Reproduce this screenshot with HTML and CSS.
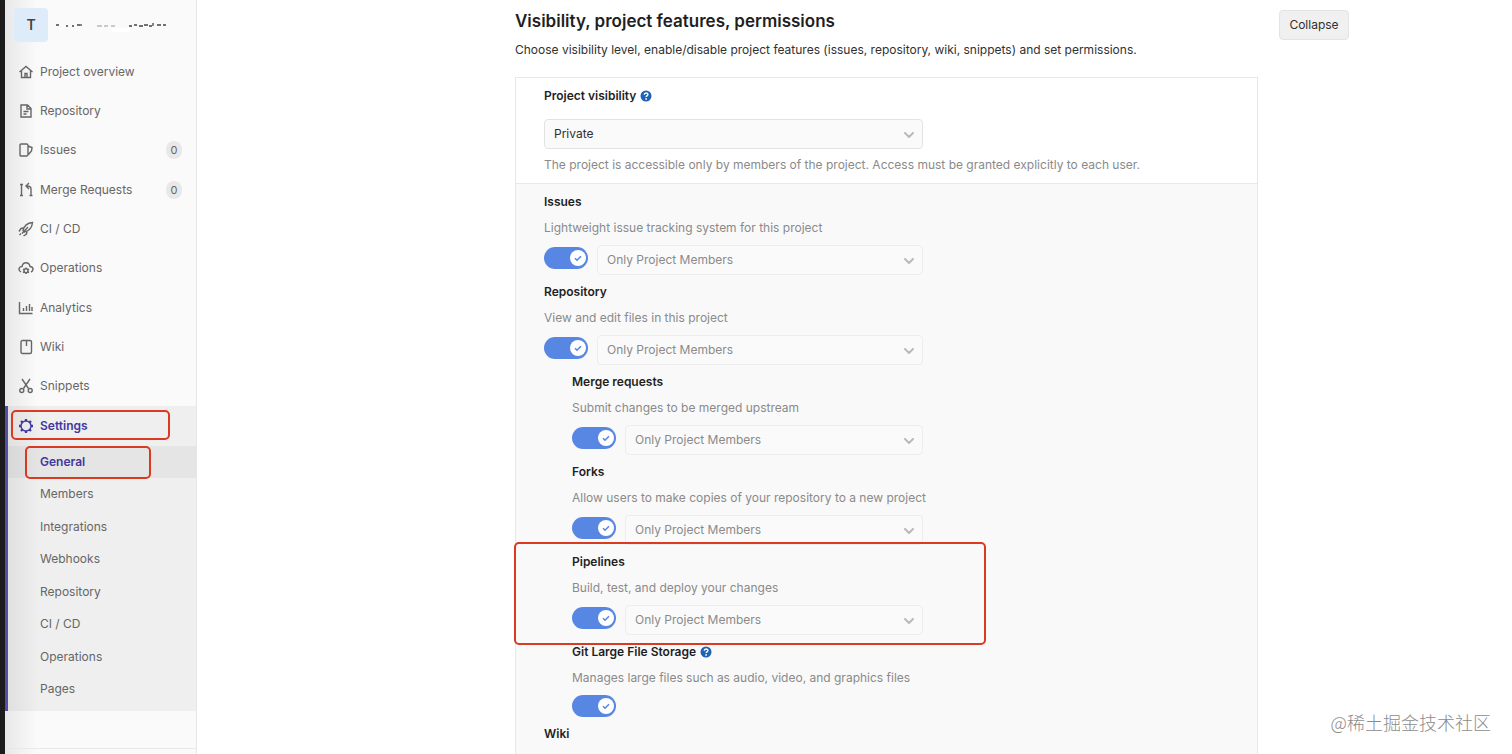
FILE: index.html
```html
<!DOCTYPE html>
<html lang="en">
<head>
    <meta charset="UTF-8">
    <meta name="viewport" content="width=device-width, initial-scale=1.0">
    <title>General Settings</title>
    <link rel="stylesheet" href="styles.css">
</head>
<body>
    <!-- Shared icons -->
    <svg class="icon-defs" aria-hidden="true">
        <symbol id="chevron" viewBox="0 0 10 6"><path d="M1 1l4 4 4-4" fill="none" stroke="currentColor" stroke-width="2" stroke-linecap="round" stroke-linejoin="round"/></symbol>
        <symbol id="check" viewBox="0 0 16 16"><path d="M5 8.200l2 2 4-4" fill="none" stroke="currentColor" stroke-width="1.600"/></symbol>
        <symbol id="question" viewBox="0 0 12 12"><circle cx="6" cy="6" r="5.500" fill="currentColor"/><path d="M4.200 4.800c.1-2.400 3.700-2.300 3.700-.2 0 1.300-1.800 1.200-1.800 2.500" fill="none" stroke="#fff" stroke-width="1.400"/><circle cx="6.100" cy="8.900" r=".9" fill="#fff"/></symbol>
    </svg>

    <div class="page">
        <aside class="sidebar">
            <a class="project" href="#" aria-label="Project">
                <span class="avatar">T</span>
                <svg class="project-name" viewBox="0 0 112 12" aria-hidden="true">
                    <path d="M2 5h3M12 6h2M18 6h2M23 5h3M27 4v2M75 6h3M80 5h3M85 6h4M90 5h4M95 6h3M99 3v3M103 5h4M109 5h3" stroke="#444" stroke-width="1.300"/>
                    <path d="M43 6h5M50 6h4M57 6h4" stroke="#999" stroke-width="1"/>
                    <path d="M58 8h18v4H58z" fill="#fff"/>
                </svg>
            </a>

            <ul class="nav">
                <li><a href="#"><svg viewBox="0 0 16 16"><path d="M1.500 8L8 2.500 14.500 8M3.500 7v6.500h9V7M7 13v-3.500h2V13"/></svg>Project overview</a></li>
                <li><a href="#"><svg viewBox="0 0 16 16"><path d="M3 2h6.500L13 5.500V14H3zM9 2v4h4M5.500 8.500h5M5.500 11h3"/></svg>Repository</a></li>
                <li><a href="#"><svg viewBox="0 0 16 16"><path d="M3 2h5.500a1.500 1.500 0 0 1 1.500 1.500v9A1.500 1.500 0 0 1 8.500 14H3a1 1 0 0 1-1-1V3a1 1 0 0 1 1-1zM10 4l4 1.500-.5 3.500-3 3.500"/></svg>Issues<span class="badge">0</span></a></li>
                <li><a href="#"><svg viewBox="0 0 16 16"><path d="M3.500 3v10M2 2.500h3M2 13.500h3M13 13V7c0-2-1-3-4-3M11 1L8 4l3 3M11.500 13.500h3"/></svg>Merge Requests<span class="badge">0</span></a></li>
                <li><a href="#"><svg viewBox="0 0 16 16"><path d="M5 9.500C6 5 9 2 14.500 1.500 14 7 11 10 6.500 11zM5.500 7l-2.500.5-2 3M9 10.500L8.500 13l-3 2M10 6l-6 6.500M1.500 14L3 12.500"/></svg>CI / CD</a></li>
                <li><a href="#"><svg viewBox="0 0 16 16"><path d="M3 12C-.5 10 1 6.500 4 6.500 5 1.500 11 1.500 12 6.500c3.500 0 4 4 1 5.500"/><circle cx="8" cy="10.800" r="2"/><path d="M8 7.500V9M8 12.500V14M5 9l1.500 1M9.500 11.700l1.500 1M5 12.700l1.500-1M9.500 10L11 9"/></svg>Operations</a></li>
                <li><a href="#"><svg viewBox="0 0 16 16"><path d="M1.500 2v11.500h13M5.500 8v3M8.500 6v5M11.500 4v7M14 7v4"/></svg>Analytics</a></li>
                <li><a href="#"><svg viewBox="0 0 16 16"><rect x="3" y="1.500" width="10.500" height="13" rx="1.500"/><path d="M8.500 2v5"/></svg>Wiki</a></li>
                <li><a href="#"><svg viewBox="0 0 16 16"><path d="M4 1l6.500 9.500M12 1L5.500 10.500"/><circle cx="3.800" cy="12.500" r="2"/><circle cx="12.200" cy="12.500" r="2"/></svg>Snippets</a></li>
            </ul>

            <div class="settings">
                <a class="settings-link" href="#"><svg viewBox="0 0 16 16"><circle cx="8" cy="8" r="5"/><path d="M8 1V3M8 13v2M1 8H3M13 8h2M3 3l1.500 1.500M11.500 11.500L13 13M3 13l1.500-1.500M11.500 4.500L13 3" stroke-width="2.300"/></svg>Settings</a>
                <ul class="subnav">
                    <li class="active"><a href="#">General</a></li>
                    <li><a href="#">Members</a></li>
                    <li><a href="#">Integrations</a></li>
                    <li><a href="#">Webhooks</a></li>
                    <li><a href="#">Repository</a></li>
                    <li><a href="#">CI / CD</a></li>
                    <li><a href="#">Operations</a></li>
                    <li><a href="#">Pages</a></li>
                </ul>
            </div>
            <div class="sidebar-footer"></div>
        </aside>

        <main>
            <section class="content">
                <header class="section-header">
                    <div>
                        <h1>Visibility, project features, permissions</h1>
                        <p>Choose visibility level, enable/disable project features (issues, repository, wiki, snippets) and set permissions.</p>
                    </div>
                    <button class="collapse" type="button">Collapse</button>
                </header>

                <form class="panel">
                    <div class="visibility">
                        <div class="title"><label for="visibility">Project visibility</label><svg class="help"><use href="#question"/></svg></div>
                        <div class="select">
                            <select id="visibility"><option>Private</option></select>
                            <svg><use href="#chevron"/></svg>
                        </div>
                        <p>The project is accessible only by members of the project. Access must be granted explicitly to each user.</p>
                    </div>

                    <div class="features">
                        <div class="feature">
                            <div class="title"><label for="issues">Issues</label></div>
                            <p>Lightweight issue tracking system for this project</p>
                            <div class="controls">
                                <span class="toggle"><input type="checkbox" id="issues" checked><svg><use href="#check"/></svg></span>
                                <div class="select"><select disabled aria-label="Issues access"><option>Only Project Members</option></select><svg><use href="#chevron"/></svg></div>
                            </div>
                        </div>
                        <div class="feature">
                            <div class="title"><label for="repository">Repository</label></div>
                            <p>View and edit files in this project</p>
                            <div class="controls">
                                <span class="toggle"><input type="checkbox" id="repository" checked><svg><use href="#check"/></svg></span>
                                <div class="select"><select disabled aria-label="Repository access"><option>Only Project Members</option></select><svg><use href="#chevron"/></svg></div>
                            </div>
                        </div>

                        <!-- Features that depend on the repository -->
                        <div class="nested">
                            <div class="feature">
                                <div class="title"><label for="merge">Merge requests</label></div>
                                <p>Submit changes to be merged upstream</p>
                                <div class="controls">
                                    <span class="toggle"><input type="checkbox" id="merge" checked><svg><use href="#check"/></svg></span>
                                    <div class="select"><select disabled aria-label="Merge requests access"><option>Only Project Members</option></select><svg><use href="#chevron"/></svg></div>
                                </div>
                            </div>
                            <div class="feature">
                                <div class="title"><label for="forks">Forks</label></div>
                                <p>Allow users to make copies of your repository to a new project</p>
                                <div class="controls">
                                    <span class="toggle"><input type="checkbox" id="forks" checked><svg><use href="#check"/></svg></span>
                                    <div class="select"><select disabled aria-label="Forks access"><option>Only Project Members</option></select><svg><use href="#chevron"/></svg></div>
                                </div>
                            </div>
                            <div class="feature marked">
                                <div class="title"><label for="pipelines">Pipelines</label></div>
                                <p>Build, test, and deploy your changes</p>
                                <div class="controls">
                                    <span class="toggle"><input type="checkbox" id="pipelines" checked><svg><use href="#check"/></svg></span>
                                    <div class="select"><select disabled aria-label="Pipelines access"><option>Only Project Members</option></select><svg><use href="#chevron"/></svg></div>
                                </div>
                            </div>
                            <div class="feature">
                                <div class="title"><label for="lfs">Git Large File Storage</label><svg class="help"><use href="#question"/></svg></div>
                                <p>Manages large files such as audio, video, and graphics files</p>
                                <span class="toggle"><input type="checkbox" id="lfs" checked><svg><use href="#check"/></svg></span>
                            </div>
                        </div>

                        <div class="feature">
                            <div class="title">Wiki</div>
                        </div>
                    </div>
                </form>
            </section>
        </main>
        <div class="watermark">@稀土掘金技术社区</div>
    </div>
</body>
</html>
```

FILE: styles.css
```css
/* Global Styles */
*, *::after {
    box-sizing: border-box;
}

body {
    margin: 0;
    font-family: Inter, "Noto Sans CJK SC", sans-serif;
    font-size: 12px;
    line-height: 20px;
    color: #303030;
    background-color: #fff;
}

h1, p, ul {
    margin: 0;
    padding: 0;
}

ul {
    list-style: none;
}

a {
    color: inherit;
    text-decoration: none;
}

.icon-defs {
    display: none;
}

.page {
    position: relative;
    display: flex;
    height: 100vh;
    overflow: hidden;
    border-left: 5px solid #1c1c1c;
}

/* Sidebar */
.sidebar {
    flex: none;
    display: flex;
    flex-direction: column;
    width: 192px;
    color: #666;
    border-right: 1px solid #e8e8e8;
    background: linear-gradient(to right, #e8e8e8, #fafafa 32px);
}

.project {
    display: flex;
    height: 52px;
    padding: 8px 0 0 9px;
}

.avatar {
    width: 34px;
    height: 34px;
    border-radius: 4px;
    background-color: #deecfa;
    color: #444;
    font-size: 14px;
    font-weight: 600;
    line-height: 34px;
    text-align: center;
}

.project-name {
    width: 112px;
    height: 12px;
    margin: 12px 0 0 6px;
}

.nav a, .settings-link {
    display: flex;
    align-items: center;
    gap: 6px;
    height: 39px;
    padding: 0 14px 0 13px;
}

.nav li:nth-child(3n) {
    padding-bottom: 1px;
}

.nav svg, .settings-link svg {
    width: 16px;
    height: 16px;
    fill: none;
    stroke: currentColor;
    stroke-width: 1.4;
}

.badge {
    width: 16px;
    height: 18px;
    margin-left: auto;
    border-radius: 9px;
    background-color: #e8e8e8;
    font-size: 11px;
    line-height: 18px;
    text-align: center;
}

.settings {
    border-left: 3px solid #5550a5;
    background: linear-gradient(to right, #e0e0e0, #efefef 32px);
}

.settings-link {
    position: relative;
    height: 40px;
    padding-left: 10px;
    color: #41389f;
    font-weight: 600;
}

.subnav {
    padding-bottom: 5px;
}

.subnav a {
    display: block;
    height: 32px;
    padding-left: 32px;
    line-height: 32px;
}

.subnav li:nth-child(2n) {
    padding-bottom: 1px;
}

.subnav .active {
    position: relative;
    background-color: rgba(0, 0, 0, 0.04);
    color: #41389f;
    font-weight: 600;
}

.sidebar-footer {
    flex: 1;
    margin-top: 37px;
    border-top: 1px solid #e8e8e8;
}

/* Red marker frames */
.settings-link::after, .active::after, .marked::after {
    content: "";
    position: absolute;
    border: 2px solid #d93a20;
    border-radius: 5px;
    pointer-events: none;
}

.settings-link::after {
    top: 4px;
    left: 3px;
    width: 159px;
    height: 30px;
}

.active::after {
    top: 0;
    left: 17px;
    width: 126px;
    height: 33px;
}

.marked::after {
    top: -10px;
    left: -58px;
    width: 472px;
    height: 103px;
}

/* Content */
main {
    flex: 1;
    padding: 10px 17px 0 16px;
}

.content {
    max-width: 990px;
    margin: 0 auto;
    padding-left: 156px;
}

.section-header {
    display: flex;
    justify-content: space-between;
    align-items: flex-start;
}

h1 {
    margin-bottom: 8px;
    color: #1f1f1f;
    font-size: 17px;
    font-weight: 600;
    line-height: 22px;
}

.collapse {
    flex: none;
    width: 70px;
    height: 30px;
    padding: 0;
    border: 1px solid #e3e3e3;
    border-radius: 4px;
    background-color: #f0f0f0;
    color: #303030;
    font: inherit;
    cursor: pointer;
}

.panel {
    max-width: 743px;
    margin-top: 17px;
    border: 1px solid #e8e8e8;
}

.visibility {
    padding: 8px 28px;
}

.visibility .select {
    max-width: 379px;
    margin: 13px 0 6px;
}

.panel p {
    color: #8a8a8a;
}

.title {
    display: flex;
    align-items: center;
    gap: 4px;
    height: 20px;
    color: #1f1f1f;
    font-weight: 600;
}

.help {
    width: 12px;
    height: 12px;
    color: #1f62b5;
}

.features {
    padding: 8px 28px;
    border-top: 1px solid #e8e8e8;
    background-color: #f9f9f9;
}

.feature {
    position: relative;
    margin-bottom: 7px;
}

.feature p {
    margin: 6px 0 7px;
}

.nested {
    padding-left: 28px;
}

.controls {
    display: flex;
    gap: 9px;
    max-width: 379px;
}

.nested .controls {
    max-width: 351px;
}

.controls .toggle {
    margin-top: 2px;
}

/* Select */
.select {
    position: relative;
    flex: 1;
}

.select select {
    display: block;
    width: 100%;
    height: 30px;
    padding: 0 9px;
    border: 1px solid #e3e3e3;
    border-radius: 4px;
    appearance: none;
    background-color: #fafafa;
    color: #303030;
    font: inherit;
}

.select select:disabled {
    border-color: #ededed;
    color: #8a8a8a;
    opacity: 1;
}

.select svg {
    position: absolute;
    top: 13px;
    right: 9px;
    width: 10px;
    height: 6px;
    color: #bababa;
    pointer-events: none;
}

/* Toggle */
.toggle {
    position: relative;
    display: block;
    flex: none;
    width: 44px;
    height: 22px;
}

.toggle input {
    display: block;
    width: 44px;
    height: 22px;
    margin: 0;
    border-radius: 11px;
    appearance: none;
    background-color: #5886e3;
    cursor: pointer;
}

.toggle svg {
    position: absolute;
    top: 3px;
    right: 2px;
    width: 16px;
    height: 16px;
    border-radius: 8px;
    background-color: #fff;
    color: #5886e3;
    pointer-events: none;
}

/* Watermark */
.watermark {
    position: absolute;
    right: 21px;
    bottom: 18px;
    color: #8c8c8c;
    font-family: "Noto Sans CJK SC", sans-serif;
    font-size: 18px;
    font-weight: 300;
    line-height: 28px;
}
```
